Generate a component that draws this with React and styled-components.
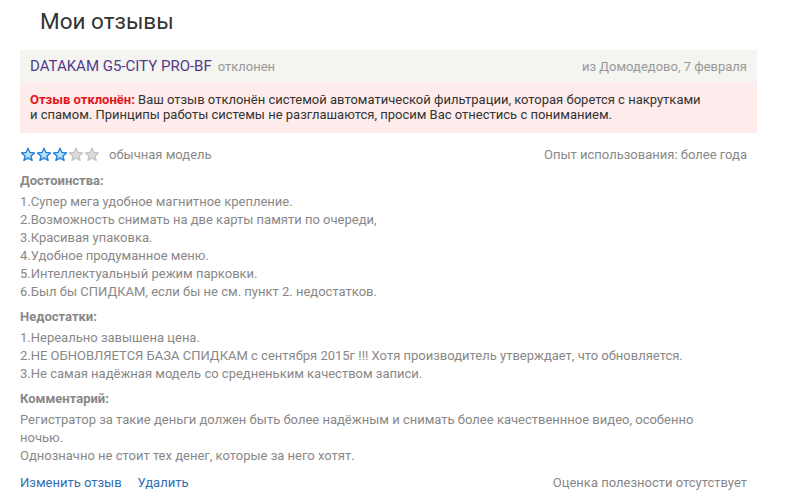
import React from 'react';
import styled, { createGlobalStyle } from 'styled-components';

const GlobalStyle = createGlobalStyle`
	body {
		margin: 0;
		background: #fff;
		font-family: Roboto, 'Liberation Sans', sans-serif;
	}
`;

const review = {
	model: 'DATAKAM G5-CITY PRO-BF',
	status: 'отклонен',
	place: 'из Домодедово, 7 февраля',
	rating: 3,
	ratingLabel: 'обычная модель',
	experience: 'Опыт использования: более года',
	pros: [
		'1.Супер мега удобное магнитное крепление.',
		'2.Возможность снимать на две карты памяти по очереди,',
		'3.Красивая упаковка.',
		'4.Удобное продуманное меню.',
		'5.Интеллектуальный режим парковки.',
		'6.Был бы СПИДКАМ, если бы не см. пункт 2. недостатков.',
	],
	cons: [
		'1.Нереально завышена цена.',
		'2.НЕ ОБНОВЛЯЕТСЯ БАЗА СПИДКАМ с сентября 2015г !!! Хотя производитель утверждает, что обновляется.',
		'3.Не самая надёжная модель со средненьким качеством записи.',
	],
	comment: [
		'Регистратор за такие деньги должен быть более надёжным и снимать более качественнное видео, особенно ночью.',
		'Однозначно не стоит тех денег, которые за него хотят.',
	],
};

const Star = ({ on }) => (
	<svg width="16" height="16" viewBox="0 0 16 16">
		{on && (
			<defs>
				<linearGradient id="sg" x1="0" y1="0" x2="0" y2="1">
					<stop offset="0" stopColor="#e8f6ff" />
					<stop offset="1" stopColor="#8fd0fb" />
				</linearGradient>
			</defs>
		)}
		<path
			d="M8 1.2l1.9 4.3 4.6.4-3.5 3 1.1 4.6L8 11.1l-4.1 2.4L5 8.9l-3.5-3 4.6-.4z"
			fill={on ? 'url(#sg)' : '#dcdcdc'}
			stroke={on ? '#1f7fd6' : '#c4c4c4'}
			strokeWidth="1.3"
			strokeLinejoin="round"
		/>
	</svg>
);

const App = () => {
	return (
		<>
			<GlobalStyle />
			<Page>
				<Title>Мои отзывы</Title>
				<Head>
					<Model>{review.model}</Model>
					<Status>{review.status}</Status>
					<Place>{review.place}</Place>
				</Head>
				<Alert>
					<b>Отзыв отклонён:</b> Ваш отзыв отклонён системой автоматической
					фильтрации, которая борется с накрутками
					<br />
					и спамом. Принципы работы системы не разглашаются, просим Вас
					отнестись с пониманием.
				</Alert>
				<Body>
					<MetaRow>
						<Stars>
							{[1, 2, 3, 4, 5].map(i => (
								<Star key={i} on={i <= review.rating} />
							))}
						</Stars>
						<Muted>{review.ratingLabel}</Muted>
						<Right>{review.experience}</Right>
					</MetaRow>
					<Section>
						<SectionTitle>Достоинства:</SectionTitle>
						<Lines>
							{review.pros.map(t => (
								<div key={t}>{t}</div>
							))}
						</Lines>
					</Section>
					<Section>
						<SectionTitle>Недостатки:</SectionTitle>
						<Lines>
							{review.cons.map(t => (
								<div key={t}>{t}</div>
							))}
						</Lines>
					</Section>
					<Section>
						<SectionTitle>Комментарий:</SectionTitle>
						<Lines narrow>
							{review.comment.map(t => (
								<div key={t}>{t}</div>
							))}
						</Lines>
					</Section>
					<Footer>
						<Link>Изменить отзыв</Link>
						<Link>Удалить</Link>
						<Right>Оценка полезности отсутствует</Right>
					</Footer>
				</Body>
			</Page>
		</>
	);
};

export default App;

const Page = styled.div`
	width: 737px;
	padding: 0 0 0 20px;
`;

const Title = styled.h1`
	margin: 0;
	padding: 7px 0 0 20px;
	height: 50px;
	box-sizing: border-box;
	font-size: 22.5px;
	font-weight: 400;
	color: #333;
	line-height: 28px;
`;

const Head = styled.div`
	display: flex;
	align-items: baseline;
	height: 32px;
	line-height: 32px;
	padding: 0 10px;
	background: #f4f4f0;
`;

const Model = styled.span`
	font-size: 15px;
	color: #533a8c;
`;

const Status = styled.span`
	margin-left: 6px;
	font-size: 13px;
	color: #999;
`;

const Place = styled.span`
	margin-left: auto;
	font-size: 13px;
	color: #999;
`;

const Alert = styled.div`
	padding: 10px 10px 11px;
	background: #fdeceb;
	font-size: 13px;
	line-height: 15px;
	color: #333;
	> b {
		color: #e3141b;
		font-weight: 700;
	}
`;

const Body = styled.div`
	padding: 12px 10px 0 0;
	font-size: 13px;
	color: #888;
`;

const MetaRow = styled.div`
	display: flex;
	align-items: center;
	height: 20px;
	line-height: 20px;
`;

const Stars = styled.div`
	display: flex;
	margin-right: 9px;
`;

const Muted = styled.span`
	color: #888;
`;

const Right = styled.span`
	margin-left: auto;
	color: #888;
`;

const Section = styled.div`
	margin-top: 7px;
`;

const SectionTitle = styled.div`
	font-weight: 700;
	line-height: 18px;
	margin-bottom: 3px;
`;

const Lines = styled.div`
	line-height: 18px;
	max-width: ${p => (p.narrow ? '690px' : 'none')};
`;

const Footer = styled.div`
	display: flex;
	align-items: center;
	margin-top: 9px;
	line-height: 18px;
`;

const Link = styled.a`
	color: #2f6fb6;
	margin-right: 16px;
	cursor: pointer;
`;
